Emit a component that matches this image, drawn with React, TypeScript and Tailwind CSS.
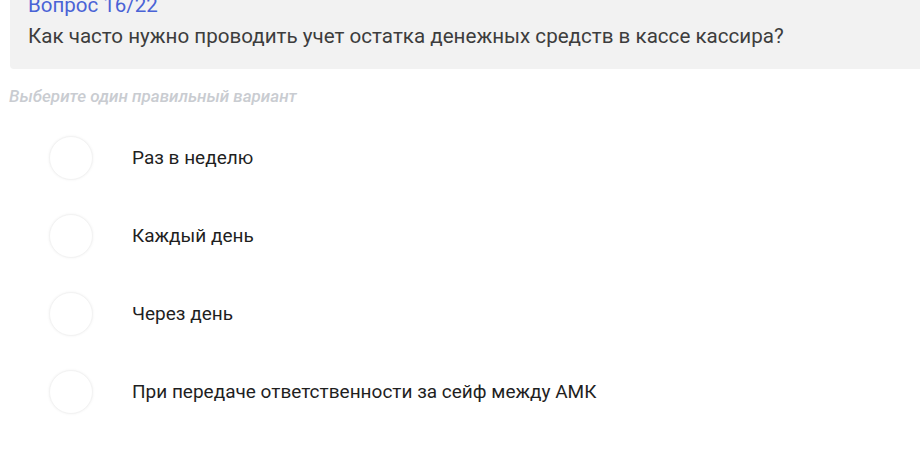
const OPTIONS = [
  "Раз в неделю",
  "Каждый день",
  "Через день",
  "При передаче ответственности за сейф между АМК",
];

export default function App() {
  return (
    <div className="h-[450px] w-[920px] overflow-hidden bg-white font-['Roboto',sans-serif]">
      <section className="-mt-[7px] ml-[10px] rounded-bl-[4px] bg-[#f2f2f2] pb-[20px] pl-[18px] pr-4">
        <h1 className="text-[20.5px] leading-[24px] text-[#4a63d6]">
          Вопрос 16/22
        </h1>
        <p className="mt-[6px] text-[20.6px] leading-[26px] text-[#3d3d3d]">
          Как часто нужно проводить учет остатка денежных средств в кассе
          кассира?
        </p>
      </section>

      <p className="mt-[16px] pl-[9px] text-[17px] font-medium italic leading-[22px] text-[#c9ccd1]">
        Выберите один правильный вариант
      </p>

      <ul className="mt-[12px] flex flex-col pl-[49px]">
        {OPTIONS.map((o) => (
          <li key={o} className="flex h-[78px] items-center gap-[39px]">
            <span className="h-[44px] w-[44px] shrink-0 rounded-full border border-[#f3f3f3] bg-white shadow-[0_0_3px_rgba(0,0,0,0.06)]" />
            <span className="text-[19px] leading-[24px] text-[#1f1f1f]">
              {o}
            </span>
          </li>
        ))}
      </ul>
    </div>
  );
}
